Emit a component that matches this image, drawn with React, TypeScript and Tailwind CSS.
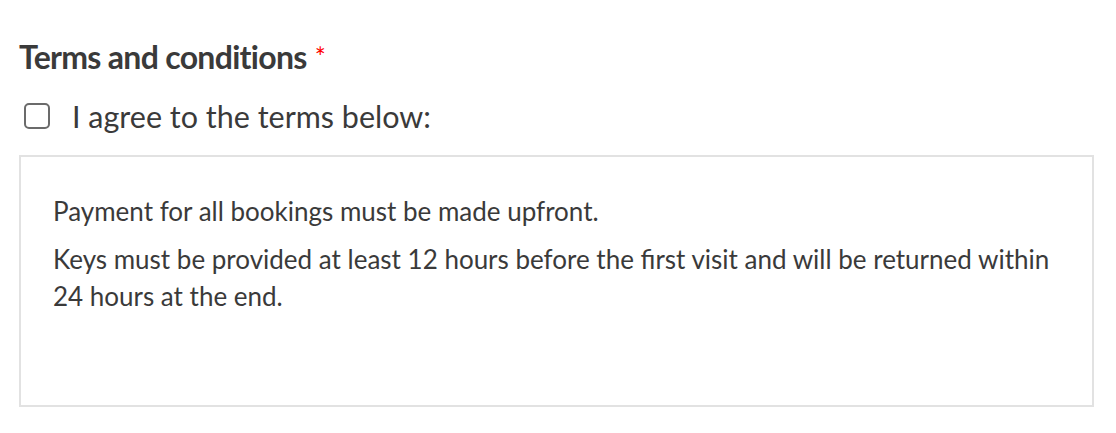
export default function App() {
  return (
    <div
      className="w-[1116px] h-[433px] bg-white text-[#333333] pt-[36px] pl-[19px] pr-[22px]"
      style={{ fontFamily: "Lato, 'Open Sans', sans-serif" }}
    >
      <div className="flex items-start">
        <span className="text-[32px] font-bold leading-[42px] tracking-[-0.7px] text-[#3a3a3a]">
          Terms and conditions
        </span>
        <span className="ml-[8px] mt-[8px] text-[26px] leading-[26px] text-[#ff0000]">*</span>
      </div>
      <label className="mt-[20px] flex items-center gap-[22px] pl-[5px]">
        <span className="w-[26px] h-[26px] rounded-[5px] border-2 border-[#6b6b6b] bg-white" />
        <span className="text-[30.5px] leading-[36px] text-[#3a3a3a]">I agree to the terms below:</span>
      </label>
      <div className="mt-[21px] h-[252px] border-2 border-[#e2e2e2] px-[32px] pt-[36px] text-[26px] leading-[37px] text-[#3a3a3a]">
        <p>Payment for all bookings must be made upfront.</p>
        <p className="mt-[11px]">
          Keys must be provided at least 12 hours before the first visit and will be returned within 24 hours at the end.
        </p>
      </div>
    </div>
  );
}
